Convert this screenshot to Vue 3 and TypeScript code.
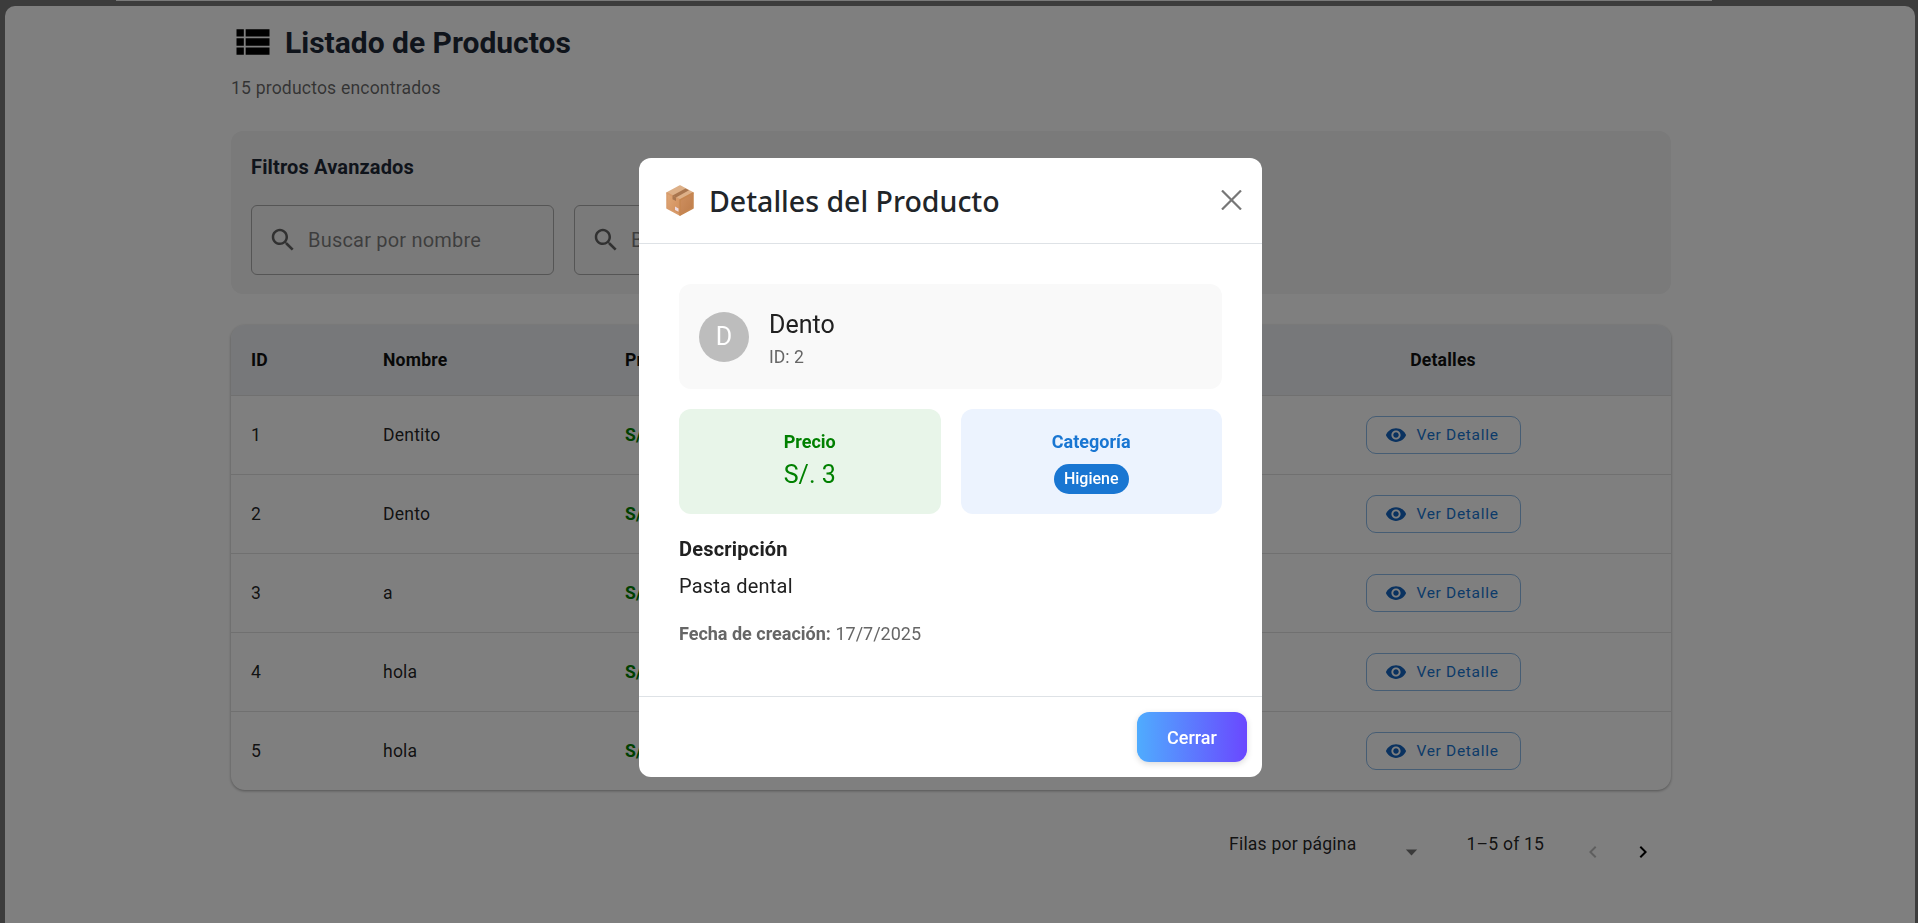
<template>
  <div class="page">
    <div class="top-strip"></div>
    <main class="panel">
      <div class="content">
        <div class="title-row">
          <svg class="list-icon" viewBox="0 0 24 24"><path d="M3 14h4v-4H3v4zm0 5h4v-4H3v4zM3 9h4V5H3v4zm5 5h13v-4H8v4zm0 5h13v-4H8v4zM8 5v4h13V5H8z" /></svg>
          <h1>Listado de Productos</h1>
        </div>
        <p class="count">15 productos encontrados</p>

        <section class="filters">
          <h2>Filtros Avanzados</h2>
          <div class="filter-row">
            <div class="search-box" v-for="label in filterLabels" :key="label">
              <svg viewBox="0 0 24 24"><path d="M15.5 14h-.79l-.28-.27C15.41 12.59 16 11.11 16 9.5 16 5.91 13.09 3 9.5 3S3 5.91 3 9.5 5.91 16 9.5 16c1.61 0 3.09-.59 4.23-1.57l.27.28v.79l5 4.99L20.49 19l-4.99-5zm-6 0C7.01 14 5 11.99 5 9.5S7.01 5 9.5 5 14 7.01 14 9.5 11.99 14 9.5 14z" /></svg>
              <span>{{ label }}</span>
            </div>
          </div>
        </section>

        <section class="table">
          <div class="row head">
            <div>ID</div>
            <div>Nombre</div>
            <div>Precio</div>
            <div>Categoría</div>
            <div class="center">Detalles</div>
          </div>
          <div class="row" v-for="p in products" :key="p.id">
            <div>{{ p.id }}</div>
            <div>{{ p.name }}</div>
            <div class="price">S/. {{ p.price }}</div>
            <div>{{ p.category }}</div>
            <div class="center">
              <button class="detail-btn">
                <svg viewBox="0 0 24 24"><path d="M12 4.5C7 4.5 2.73 7.61 1 12c1.73 4.39 6 7.5 11 7.5s9.27-3.11 11-7.5c-1.73-4.39-6-7.5-11-7.5zM12 17c-2.76 0-5-2.24-5-5s2.24-5 5-5 5 2.24 5 5-2.24 5-5 5zm0-8c-1.66 0-3 1.34-3 3s1.34 3 3 3 3-1.34 3-3-1.34-3-3-3z" /></svg>
                Ver Detalle
              </button>
            </div>
          </div>
        </section>

        <div class="pagination">
          <span class="rows-label">Filas por página</span>
          <svg class="caret" viewBox="0 0 14 8"><path d="M0.5 0.5h13L7 7.5z" /></svg>
          <span class="range">1–5 of 15</span>
          <svg class="chev off" viewBox="0 0 24 24"><path d="M15.41 7.41 14 6l-6 6 6 6 1.41-1.41L10.83 12z" /></svg>
          <svg class="chev" viewBox="0 0 24 24"><path d="M10 6 8.59 7.41 13.17 12l-4.58 4.59L10 18l6-6z" /></svg>
        </div>
      </div>
    </main>

    <div class="overlay">
      <div class="modal">
        <header class="modal-head">
          <svg class="box-icon" viewBox="0 0 28 31">
            <defs>
              <linearGradient id="boxLeft" x1="0" y1="0" x2="1" y2="1">
                <stop offset="0" stop-color="#e0a878" />
                <stop offset="1" stop-color="#d08c58" />
              </linearGradient>
              <linearGradient id="boxRight" x1="0" y1="0" x2="1" y2="1">
                <stop offset="0" stop-color="#cf9060" />
                <stop offset="1" stop-color="#bd7c4a" />
              </linearGradient>
            </defs>
            <g stroke-linejoin="round" stroke-width="1.5">
              <polygon points="14,1 27,8 14,15 1,8" fill="#ddb088" stroke="#ddb088" />
              <polygon points="1,8 14,15 14,30 1,23" fill="url(#boxLeft)" stroke="#d89c6c" />
              <polygon points="27,8 14,15 14,30 27,23" fill="url(#boxRight)" stroke="#c68650" />
            </g>
            <polygon points="19.5,3.4 23,5.2 10,12.4 6.5,10.5" fill="#a9764f" />
            <polygon points="6.5,10.5 10,12.4 10,16 6.5,14.2" fill="#a9764f" />
            <polygon points="9,21.5 12.5,23.4 12.5,26.8 9,24.9" fill="#eedbe0" />
          </svg>
          <h3>Detalles del Producto</h3>
          <svg class="close" viewBox="0 0 21 20"><path d="M1 0.5 20 19.5M20 0.5 1 19.5" /></svg>
        </header>

        <div class="modal-body">
          <div class="info-card">
            <div class="avatar">D</div>
            <div class="info-text">
              <div class="prod-name">Dento</div>
              <div class="prod-id">ID: 2</div>
            </div>
          </div>

          <div class="stat-grid">
            <div class="stat green">
              <div class="stat-label">Precio</div>
              <div class="stat-value">S/. 3</div>
            </div>
            <div class="stat blue">
              <div class="stat-label">Categoría</div>
              <span class="chip">Higiene</span>
            </div>
          </div>

          <div class="desc-title">Descripción</div>
          <div class="desc-text">Pasta dental</div>
          <div class="created"><strong>Fecha de creación:</strong> 17/7/2025</div>
        </div>

        <footer class="modal-foot">
          <button class="close-btn">Cerrar</button>
        </footer>
      </div>
    </div>
  </div>
</template>

<script setup lang="ts">
type Product = {
  id: number
  name: string
  price: number
  category: string
}

const filterLabels: string[] = ['Buscar por nombre', 'Buscar por categoría']

const products: Product[] = [
  { id: 1, name: 'Dentito', price: 5, category: 'Higiene' },
  { id: 2, name: 'Dento', price: 3, category: 'Higiene' },
  { id: 3, name: 'a', price: 1, category: 'Otros' },
  { id: 4, name: 'hola', price: 2, category: 'Otros' },
  { id: 5, name: 'hola', price: 2, category: 'Otros' }
]
</script>

<style>
html,
body {
  margin: 0;
  overflow: hidden;
}
</style>

<style scoped>
.page {
  height: 923px;
  overflow: hidden;
  background: #787878;
  padding-left: 5px;
  padding-right: 3px;
  box-sizing: border-box;
  font-family: Roboto, "Liberation Sans", sans-serif;
  color: rgba(0, 0, 0, 0.87);
}

.top-strip {
  width: 1596px;
  height: 1px;
  margin: 0 0 5px 111px;
  background: #f4f4f4;
}

.panel {
  height: 917px;
  background: #fff;
  border-radius: 10px 10px 0 0;
  padding-left: 226px;
}

.content {
  width: 1440px;
}

.title-row {
  display: flex;
  align-items: center;
  height: 44px;
  padding-top: 14px;
}

.list-icon {
  width: 44px;
  height: 44px;
  margin-right: 10px;
  fill: #000;
}

h1 {
  margin: 0;
  font-size: 30px;
  font-weight: 700;
  color: #1f2937;
}

.count {
  margin: 12px 0 0;
  font-size: 17.6px;
  line-height: 24px;
  letter-spacing: 0.165px;
  color: rgba(0, 0, 0, 0.6);
}

.filters {
  margin-top: 31px;
  height: 163px;
  box-sizing: border-box;
  padding: 24px 20px 0;
  background: #f4f4f4;
  border-radius: 12px;
}

h2 {
  margin: 0;
  font-size: 20px;
  line-height: 25px;
  font-weight: 700;
  letter-spacing: 0.15px;
  color: #1f2937;
}

.filter-row {
  display: flex;
  gap: 20px;
  margin-top: 25px;
}

.search-box {
  width: 303px;
  height: 70px;
  box-sizing: border-box;
  display: flex;
  align-items: center;
  padding-left: 16px;
  gap: 10px;
  border: 1px solid rgba(0, 0, 0, 0.3);
  border-radius: 6px;
  font-size: 20px;
  letter-spacing: 0.2px;
  color: rgba(0, 0, 0, 0.5);
}

.search-box svg {
  width: 30px;
  height: 30px;
  fill: rgba(0, 0, 0, 0.6);
}

.table {
  margin-top: 31px;
  border-radius: 14px;
  overflow: hidden;
  box-shadow: 0 1px 3px rgba(0, 0, 0, 0.35);
}

.row {
  display: grid;
  grid-template-columns: 132px 242px 220px 390px 456px;
  align-items: center;
  height: 79px;
  box-sizing: border-box;
  border-bottom: 1px solid #e0e0e0;
  font-size: 17.6px;
  letter-spacing: 0.19px;
}

.row:last-child {
  height: 78px;
  border-bottom: none;
}

.row > div {
  padding-left: 20px;
}

.row > .center {
  padding-left: 0;
  text-align: center;
}

.head {
  height: 71px;
  background: #eef1f5;
  font-weight: 700;
  color: #111;
}

.price {
  color: green;
  font-weight: 700;
}

.detail-btn {
  width: 155px;
  height: 38px;
  display: inline-flex;
  align-items: center;
  justify-content: center;
  gap: 9px;
  padding: 0 2px 0 0;
  background: transparent;
  border: 1px solid rgba(25, 118, 210, 0.5);
  border-radius: 10px;
  font-family: inherit;
  font-size: 15.5px;
  font-weight: 400;
  letter-spacing: 0.7px;
  color: #1976d2;
}

.detail-btn svg {
  width: 22px;
  height: 22px;
  fill: #1565c0;
}

.pagination {
  display: flex;
  height: 60px;
  padding-left: 998px;
  padding-top: 38px;
  font-size: 17.6px;
  letter-spacing: 0.19px;
}

.rows-label,
.range {
  line-height: 24px;
  margin-top: 4px;
}

.caret {
  width: 13px;
  height: 7px;
  margin: 21px 0 0 49px;
  fill: rgba(0, 0, 0, 0.54);
}

.range {
  margin-left: 48px;
}

.chev {
  width: 24px;
  height: 24px;
  margin-top: 12px;
  fill: #000;
}

.chev.off {
  margin-left: 37px;
  fill: rgba(0, 0, 0, 0.26);
}

.chev:last-child {
  margin-left: 26px;
}

.overlay {
  position: fixed;
  inset: 0;
  display: flex;
  align-items: flex-start;
  box-sizing: border-box;
  padding: 158px 0 0 639px;
  background: rgba(0, 0, 0, 0.5);
}

.modal {
  width: 623px;
  height: 619px;
  display: flex;
  flex-direction: column;
  background: #fff;
  border-radius: 12px;
  overflow: hidden;
}

.modal-head {
  height: 86px;
  flex: none;
  box-sizing: border-box;
  display: flex;
  align-items: center;
  padding: 0 20px 0 27px;
  border-bottom: 1px solid #dee2e6;
}

.box-icon {
  width: 28px;
  height: 31px;
  margin-right: 15px;
}

h3 {
  flex: 1;
  margin: 0;
  font-family: "Noto Sans", "Open Sans", sans-serif;
  font-size: 28.5px;
  font-weight: 500;
  color: #212529;
}

.close {
  width: 21px;
  height: 20px;
  margin-top: -2px;
  fill: none;
  stroke: #777;
  stroke-width: 2.2;
}

.modal-body {
  flex: 1;
  padding: 40px 40px 0;
}

.info-card {
  height: 105px;
  display: flex;
  align-items: center;
  gap: 20px;
  padding-left: 20px;
  background: #f9f9f9;
  border-radius: 12px;
}

.info-text {
  padding-top: 2px;
}

.avatar {
  width: 50px;
  height: 50px;
  display: flex;
  align-items: center;
  justify-content: center;
  border-radius: 50%;
  background: #bdbdbd;
  color: #fff;
  font-size: 25px;
}

.prod-name {
  font-size: 25px;
  line-height: 34px;
  color: #212121;
}

.prod-id {
  margin-top: 4px;
  font-size: 17.6px;
  line-height: 22px;
  color: #666;
}

.stat-grid {
  display: grid;
  grid-template-columns: 1fr 1fr;
  gap: 20px;
  margin-top: 20px;
}

.stat {
  height: 105px;
  box-sizing: border-box;
  padding-top: 22px;
  text-align: center;
  border-radius: 12px;
}

.stat-label {
  font-size: 18px;
  line-height: 22px;
  font-weight: 700;
}

.green {
  background: #e8f5e9;
  color: green;
}

.blue {
  background: #ecf3fe;
  color: #1976d2;
}

.stat-value {
  margin-top: 4px;
  font-size: 25px;
  line-height: 36px;
}

.chip {
  display: inline-block;
  margin-top: 11px;
  padding: 0 10px;
  height: 30px;
  line-height: 30px;
  border-radius: 15px;
  background: #1976d2;
  color: #fff;
  font-size: 16px;
  font-weight: 500;
}

.desc-title {
  margin-top: 22px;
  font-size: 20px;
  line-height: 26px;
  font-weight: 700;
  letter-spacing: 0.2px;
  color: #212121;
}

.desc-text {
  margin-top: 11px;
  font-size: 20px;
  line-height: 26px;
  letter-spacing: 0.2px;
  color: #212121;
}

.created {
  margin-top: 22px;
  font-size: 18px;
  line-height: 26px;
  color: #666;
}

.modal-foot {
  height: 81px;
  flex: none;
  box-sizing: border-box;
  display: flex;
  justify-content: flex-end;
  padding: 15px 15px 0 0;
  border-top: 1px solid #dee2e6;
}

.close-btn {
  width: 110px;
  height: 50px;
  border: none;
  border-radius: 12px;
  background: linear-gradient(90deg, #4facfe, #6a48ff);
  box-shadow: 0 2px 6px rgba(0, 0, 0, 0.15);
  color: #fff;
  font-family: inherit;
  font-size: 18px;
  font-weight: 500;
}
</style>
